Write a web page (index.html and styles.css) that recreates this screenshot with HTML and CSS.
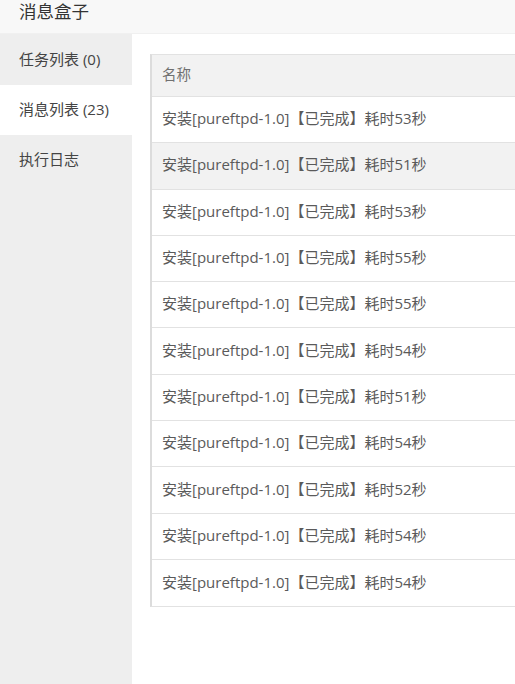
FILE: index.html
```html
<!DOCTYPE html>
<html lang="zh">
<head>
<meta charset="utf-8">
<title>消息盒子</title>
<link rel="stylesheet" href="styles.css">
</head>
<body>
<div class="page">
  <header class="title-bar">消息盒子</header>
  <div class="main">
    <nav class="sidebar">
      <div class="nav-item">任务列表 (0)</div>
      <div class="nav-item active">消息列表 (23)</div>
      <div class="nav-item">执行日志</div>
    </nav>
    <section class="content">
      <div class="table">
        <div class="row head">名称</div>
        <div class="row">安装[pureftpd-1.0]【已完成】耗时53秒</div>
        <div class="row hover">安装[pureftpd-1.0]【已完成】耗时51秒</div>
        <div class="row">安装[pureftpd-1.0]【已完成】耗时53秒</div>
        <div class="row">安装[pureftpd-1.0]【已完成】耗时55秒</div>
        <div class="row">安装[pureftpd-1.0]【已完成】耗时55秒</div>
        <div class="row">安装[pureftpd-1.0]【已完成】耗时54秒</div>
        <div class="row">安装[pureftpd-1.0]【已完成】耗时51秒</div>
        <div class="row">安装[pureftpd-1.0]【已完成】耗时54秒</div>
        <div class="row">安装[pureftpd-1.0]【已完成】耗时52秒</div>
        <div class="row">安装[pureftpd-1.0]【已完成】耗时54秒</div>
        <div class="row">安装[pureftpd-1.0]【已完成】耗时54秒</div>
      </div>
    </section>
  </div>
</div>
</body>
</html>
```
FILE: styles.css
```css
html, body {
  margin: 0;
  padding: 0;
  background: #fff;
  overflow: hidden;
}
body {
  font-family: "Open Sans", "Noto Sans CJK SC", sans-serif;
  color: #555;
  font-size: 15px;
}
.page {
  width: 515px;
  height: 684px;
  display: flex;
  flex-direction: column;
}
.title-bar {
  height: 34px;
  box-sizing: border-box;
  background: #f8f8f8;
  border-bottom: 1px solid #f0f0f0;
  padding: 1px 0 0 19px;
  font-size: 17.5px;
  line-height: 20px;
  color: #333;
  flex: none;
}
.main {
  flex: 1;
  display: flex;
  min-height: 0;
}
.sidebar {
  width: 132px;
  flex: none;
  background: #eeeeee;
  padding-top: 1px;
}
.nav-item {
  height: 50px;
  line-height: 49px;
  padding-left: 19px;
  color: #444;
  font-size: 15px;
}
.nav-item.active {
  background: #fff;
}
.content {
  flex: 1;
  padding: 20px 0 0 18px;
  min-width: 0;
  overflow: hidden;
}
.table {
  width: 600px;
  border: 1px solid #e2e2e2;
  border-left: 2px solid #dcdcdc;
}
.row {
  height: 46.3px;
  box-sizing: border-box;
  border-bottom: 1px solid #e2e2e2;
  padding: 0 0 4px 10px;
  display: flex;
  align-items: center;
  color: #5a5a5a;
  white-space: nowrap;
}
.row:last-child {
  border-bottom: none;
}
.row.head {
  height: 42px;
  background: #f2f2f2;
  color: #707070;
  font-size: 14.5px;
}
.row.hover {
  background: #f2f2f2;
}
```
